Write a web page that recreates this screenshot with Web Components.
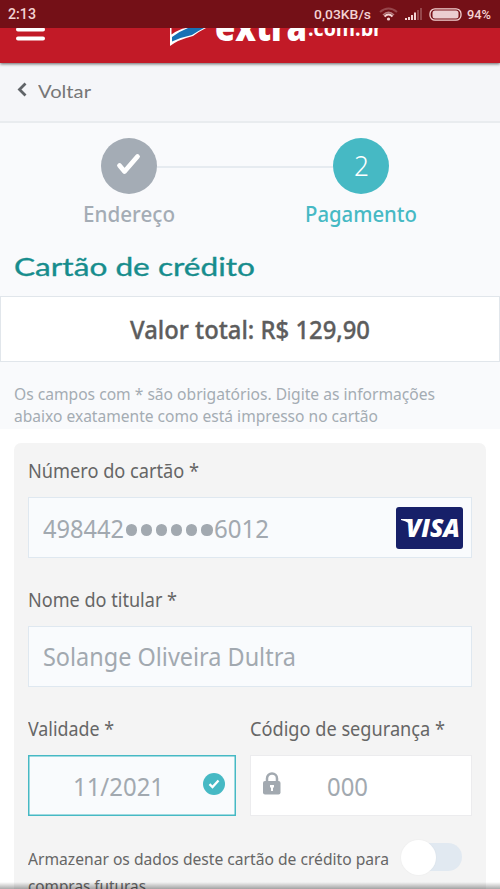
<!DOCTYPE html>
<html lang="pt-BR"><head><meta charset="utf-8"><title>Cartão de crédito</title>
<style>html,body{margin:0;height:889px;overflow:hidden;background:#fff}body{font-family:"Noto Sans","Liberation Sans",sans-serif;color:#666}</style></head>
<body><checkout-page></checkout-page>
<script>
const define=(name,html,init)=>customElements.define(name,class extends HTMLElement{
  connectedCallback(){ if(this.shadowRoot)return; const t=document.createElement('template');t.innerHTML=html;
    this.attachShadow({mode:'open'}).append(t.content.cloneNode(true)); if(init)init(this,this.shadowRoot); }
});
// One line of type condensed or widened to a set measure.
define('fit-text',`<style>:host{display:block;flex:none;white-space:nowrap}span{display:inline-block;transform-origin:0 50%;vertical-align:top}</style><span><slot></slot></span>`,(el,root)=>{
  const s=root.querySelector('span'),w=+el.getAttribute('w');
  el.style.width=w+'px';el.style.height=el.style.lineHeight=(el.getAttribute('lh')||30)+'px';el.style.fontSize=el.getAttribute('size')+'px';
  s.style.transform='scaleX('+w/s.getBoundingClientRect().width+')';
});
define('status-bar',`<style>:host{display:flex;height:28px;background:#741017;color:#f3d3d3;align-items:center;padding:0 9px 0 8px;box-sizing:border-box;font-family:Roboto,sans-serif;font-weight:500;position:relative;z-index:2}svg{display:block;flex:none}.grow{flex:1}.a{margin-left:8px}.b{margin-left:7px}.c{margin-left:7px;margin-right:4px}</style>
<fit-text w="28" size="14" lh="27">2:13</fit-text><div class="grow"></div><fit-text w="57" size="13.500" lh="27">0,03KB/s</fit-text>
<svg class="a" width="19" height="14" viewBox="0 0 19 14" fill="none"><path d="M1 5Q9.500-2 18 5" stroke="#96464b" stroke-width="2"/><path d="M4 8Q9.500 2.700 15 8" stroke="#b67b7e" stroke-width="1.600"/><path d="M5.500 9.500Q9.500 5.500 13.500 9.500" stroke="#f3d3d3" stroke-width="1.800"/><circle cx="9.500" cy="12" r="1.600" fill="#f3d3d3"/></svg>
<svg class="b" width="17" height="14" viewBox="0 0 17 14"><path fill="#f3d3d3" d="M0 11h2v2H0zM3 10h2v3H3zM6 8h2v5H6zM9 5.500h2V13H9z"/><path fill="#96464b" d="M12 3h2v10h-2zM15 1h2v12h-2z"/></svg>
<svg class="c" width="34" height="13" viewBox="0 0 34 13"><rect x="1" y=".8" width="31" height="11.400" rx="5" fill="none" stroke="#f3d3d3" stroke-width="1.300"/><rect x="3.500" y="2.500" width="26" height="8" rx="2.500" fill="#ebcdd0"/></svg>
<fit-text w="24" size="13.500" lh="27">94%</fit-text>`);
define('store-header',`<style>:host{display:flex;height:35px;background:#c21a27;color:#fff;overflow:visible;position:relative;z-index:1;box-shadow:0 1px 3px #0009;clip-path:inset(0 0 -8px 0)}.m{margin-left:16px}.f{margin-left:125px}.e{font-family:"Open Sans","Noto Sans",sans-serif;font-weight:800;margin:-25px 0 0 9px}.c{font-family:"Open Sans","Noto Sans",sans-serif;font-weight:700;margin:-12px 0 0 1px}svg{display:block;flex:none}</style>
<svg class="m" width="29" height="14"><path d="M2 1.500h25M2 10.500h25" stroke="#fff" stroke-width="4" stroke-linecap="round"/></svg>
<svg class="f" width="36" height="19" viewBox="0 0 36 19"><path d="M0 0H36Q28 4 23 8Q15 10 8 13Q4 15 0 18Z" fill="#fff"/><path d="M1.500 0H16Q9 1 1.500 6.500Z" fill="#c21a27"/><path d="M2 9Q10 3 18 0H34Q28 3 22 7Q12 9 2 13.500Z" fill="#1771b5"/></svg>
<fit-text class="e" w="92" size="39" lh="46">extra</fit-text><fit-text class="c" w="74" size="22" lh="22">.com.br</fit-text>`);
define('back-link',`<style>:host{display:flex;height:60px;box-sizing:border-box;background:#f5f6f9;border-bottom:2px solid #e9ecef;color:#777;font-family:Lato,sans-serif;padding:13px 0 0 17px}svg{margin:6px 11px 0 0}</style><svg width="10" height="15"><path d="M8.500 1.500L2.500 7.500L8.500 13.500" fill="none" stroke="#606468" stroke-width="2.800"/></svg><fit-text w="53" size="17" lh="31"><slot></slot></fit-text>`);
define('step-list',`<style>:host{display:grid;grid-template-columns:258px 206px;height:116px;padding-top:15px;box-sizing:border-box}.s{display:flex;flex-direction:column;align-items:center;font-weight:500}.o{width:56px;height:56px;border-radius:50%;background:#a4acb5;display:flex;align-items:center;justify-content:center;color:#fff;font-weight:400;flex:none}.on{color:#46b9c4}.on .o{background:#46b9c4}.off{color:#a4acb5}.on .o{color:#fff}fit-text.l{margin-top:3px}.line{position:absolute;left:157px;top:166px;width:176px;height:2px;background:#e6ebf0}</style>
<div class="line"></div><div class="s off"><div class="o"><svg width="28" height="28" viewBox="0 0 28 28"><path d="M4.500 13.500L9.500 19.500L22.500 4.500" stroke="#fff" stroke-width="4.800" stroke-linecap="round" stroke-linejoin="round" fill="none"/></svg></div><fit-text class="l" w="92" size="22.500" lh="34">Endereço</fit-text></div><div class="s on"><div class="o"><fit-text w="15" size="27" lh="56" style="font-weight:300">2</fit-text></div><fit-text class="l" w="112" size="22.500" lh="34">Pagamento</fit-text></div>`);
define('card-panel',`<style>:host{display:block;box-sizing:border-box;margin:14px 14px 0;padding:12px 14px;height:460px;background:#f4f4f4;border-radius:7px}</style><slot></slot>`);
define('form-field',`<style>:host{display:block;height:129px;flex:none;min-width:0}.b{box-sizing:border-box;height:61px;margin-top:11px;border:1px solid #dfe8f0;background:#f9fbfd;color:#a2a9b0;display:flex;align-items:center;padding:0 8px 0 14px}:host([valid]) .b{border-color:#46b9c4;box-shadow:inset 0 0 0 .5px #46b9c4;padding-left:44px}:host([plain]) .b{background:#fff;border-color:#ececee;padding-left:12px}.g{flex:1}.x{display:flex}</style>
<fit-text size="19" lh="31"></fit-text><div class="b"><slot></slot><div class="g"></div><div class="x"><slot name="icon"></slot></div></div>`,(el,r)=>{
  const old=r.querySelector('fit-text'),n=document.createElement('fit-text');
  n.textContent=el.getAttribute('label');n.setAttribute('w',el.getAttribute('lw'));n.setAttribute('size',19);n.setAttribute('lh',31);
  n.style.cssText='position:relative;top:.5px';old.replaceWith(n);
});
define('masked-dots',`<style>:host{display:flex;gap:4px;padding:5px 1px 0 2px}i{width:11.100px;height:11.100px;border-radius:50%;background:#a2a9b0}</style><i></i><i></i><i></i><i></i><i></i><i></i>`);
define('visa-mark',`<style>:host{display:flex;width:67px;height:42px;border-radius:3px;background:#172069;color:#fff;box-sizing:border-box;padding:0 0 0 10px;font:italic 800 25px/42px "Open Sans",sans-serif;position:relative}svg{position:absolute;left:5px;top:12px}</style><svg width="14" height="9"><path d="M0 0H6Q10 0 10 3L12 9Q9 3 0 1Z" fill="#fff"/></svg><fit-text w="54" size="25" lh="41">VISA</fit-text>`);
define('toggle-switch',`<style>:host{display:block;position:relative;width:61px;height:35px;flex:none}.t{position:absolute;left:15px;top:3px;width:46px;height:28px;border-radius:14px;background:#e1e9f1}.k{position:absolute;left:0;top:0;width:35px;height:35px;border-radius:50%;background:#fff;box-shadow:0 0 2px #0000000d}</style><div class="t"></div><div class="k"></div>`);
define('save-card',`<style>:host{display:flex;color:#666}div{padding-top:2px}toggle-switch{margin:-2px 0 0 12px}</style><div><fit-text w="361" size="16.500" lh="30">Armazenar os dados deste cartão de crédito para</fit-text><fit-text w="118" size="16.500" lh="24">compras futuras</fit-text></div><toggle-switch></toggle-switch>`);
define('checkout-page',`<style>:host{display:block;position:relative;width:500px;height:889px;overflow:hidden}.top{background:#f9fafc;height:306px}.title{font-family:Lato,sans-serif;color:#178d8d;font-weight:400;padding-left:14px;height:57px;-webkit-text-stroke:.35px}.total{box-sizing:border-box;height:66px;background:#fff;border:1px solid #e1e6eb;font-weight:500;-webkit-text-stroke:.35px;color:#5d5d5d;display:flex;align-items:center;justify-content:center}.note{padding:20px 13px 0 14px;color:#a4acb3;height:47px}.row{display:flex;gap:14px;height:129px}.fade{position:absolute;left:0;right:0;bottom:0;height:7px;background:linear-gradient(#0000,#0005)}</style>
<status-bar></status-bar><store-header></store-header><back-link>Voltar</back-link>
<div class="top"><step-list></step-list><div class="title"><fit-text w="241" size="25.500" lh="54">Cartão de crédito</fit-text></div>
<div class="total"><fit-text w="240" size="26" lh="64">Valor total: R$ 129,90</fit-text></div>
<div class="note"><fit-text w="421" size="16.500" lh="23">Os campos com * são obrigatórios. Digite as informações</fit-text><fit-text w="364" size="16.500" lh="22">abaixo exatamente como está impresso no cartão</fit-text></div></div>
<card-panel>
<form-field label="Número do cartão *" lw="171"><fit-text w="81" size="25" lh="58">498442</fit-text><masked-dots></masked-dots><fit-text w="55" size="25" lh="58">6012</fit-text><visa-mark slot="icon"></visa-mark></form-field>
<form-field label="Nome do titular *" lw="149"><fit-text w="253" size="24.500" lh="58">Solange Oliveira Dultra</fit-text></form-field>
<div class="row"><form-field valid style="width:208px" label="Validade *" lw="86"><fit-text w="91" size="25" lh="58">11/2021</fit-text><svg slot="icon" width="24" height="24" style="margin:-3px 1px 0 0"><circle cx="12" cy="12" r="11" fill="#46b9c4"/><path d="M7.500 12.200L10.500 15L16.500 8.500" fill="none" stroke="#fff" stroke-width="2.300"/></svg></form-field>
<form-field plain style="width:222px" label="Código de segurança *" lw="195"><svg width="18" height="23" viewBox="0 0 18 23" style="margin-top:-4px"><path d="M4 10V6.500a5 5 0 0 1 10 0V10" fill="none" stroke="#a2a9b0" stroke-width="2.500"/><rect y="9" width="17.500" height="13.500" rx="2" fill="#a2a9b0"/><path d="M7 13h4v2l-1 1v3H8v-3l-1-1z" fill="#fff"/></svg><fit-text w="41" size="25" lh="58" style="margin-left:46px">000</fit-text></form-field></div>
<save-card></save-card></card-panel><div class="fade"></div>`);
</script></body></html>
